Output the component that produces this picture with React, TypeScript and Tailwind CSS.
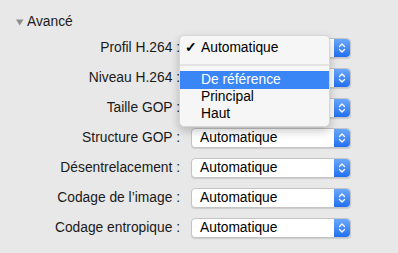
import React from 'react';

const rows = [
  'Profil H.264',
  'Niveau H.264',
  'Taille GOP',
  'Structure GOP',
  'Désentrelacement',
  "Codage de l’image",
  'Codage entropique',
];

const Stepper: React.FC = () => (
  <div className="w-[16px] h-full rounded-r-[4px] bg-gradient-to-b from-[#6aa8fa] to-[#1f6ff2] flex items-center justify-center">
    <svg width="8" height="12" viewBox="0 0 8 12" fill="none" stroke="white" strokeWidth="1.3" strokeLinecap="round" strokeLinejoin="round">
      <path d="M1.5 4.5 L4 2 L6.5 4.5" />
      <path d="M1.5 7.5 L4 10 L6.5 7.5" />
    </svg>
  </div>
);

const Select: React.FC = () => (
  <div className="w-[160px] h-[20px] flex bg-white rounded-[4px] border border-[#c4c4c4] shadow-[0_1px_1px_rgba(0,0,0,0.12)]">
    <div className="flex-1 flex items-center pl-[8px] text-black">Automatique</div>
    <Stepper />
  </div>
);

export default function App() {
  return (
    <div className="relative w-[398px] h-[253px] bg-[#e8e8e8] overflow-hidden font-['Liberation_Sans',Arial,sans-serif] text-[13.8px] text-[#1a1a1a]">
      <div className="flex items-center h-[14px] mt-[15px] pl-[16px]">
        <svg width="8" height="7" viewBox="0 0 8 7" className="mr-[3px]">
          <path d="M0 0.5 L7.5 0.5 L3.75 6.5 Z" fill="#8e8e8e" />
        </svg>
        <span>Avancé</span>
      </div>
      <div className="flex flex-col gap-[10px] mt-[9px]">
        {rows.map((r) => (
          <div key={r} className="flex items-center h-[20px]">
            <div className="w-[180px] text-right">{r} :</div>
            <div className="ml-[11px]">
              <Select />
            </div>
          </div>
        ))}
      </div>

      {/* open pop-up menu */}
      <div className="absolute left-[179px] top-[35px] w-[151px] h-[92px] rounded-[5px] bg-[#f6f6f6] border border-[#d6d6d6] shadow-[0_4px_10px_rgba(0,0,0,0.22)] pt-[4px] text-black">
        <div className="flex items-center h-[17px] pl-[5px]">
          <span className="w-[16px] font-bold">✓</span>
          <span>Automatique</span>
        </div>
        <div className="h-[2px] bg-[#e4e4e4] mt-[7px] mb-[5px]" />
        <div className="flex items-center h-[18px] pl-[21px] bg-[#3a86f6] text-white">De référence</div>
        <div className="flex items-center h-[17px] pl-[21px]">Principal</div>
        <div className="flex items-center h-[17px] pl-[21px]">Haut</div>
      </div>
    </div>
  );
}
